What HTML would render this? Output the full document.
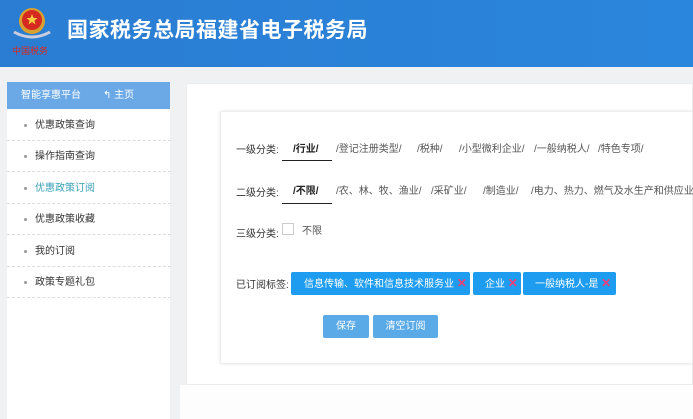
<!DOCTYPE html>
<html><head><meta charset="utf-8"><style>
*{margin:0;padding:0;box-sizing:border-box}
body{width:693px;height:419px;overflow:hidden;background:#f0f1f3;font-family:"Liberation Sans","Noto Sans CJK SC",sans-serif;position:relative;color:#333}
.a{position:absolute;white-space:nowrap}
#hd{left:0;top:0;width:693px;height:67px;background:linear-gradient(90deg,#2a7dd2,#2a86dc)}
#title{left:67px;top:14px;font-size:21px;font-weight:bold;color:#fff;letter-spacing:0.5px}
#sb{left:7px;top:82px;width:163px;height:337px;background:#fff}
#sbh{left:7px;top:82px;width:163px;height:27px;background:#6aa9e6;color:#fff;font-size:10px;line-height:27px}
.mi{left:7px;width:164px;height:31px;border-bottom:1px dashed #ddd;font-size:10px;line-height:31px;padding-left:28px;color:#333}
.mi:before{content:"";position:absolute;left:17px;top:14px;width:3px;height:3px;border-radius:50%;background:#999}
#mp{left:186px;top:83px;width:507px;height:302px;background:#fff;border:1px solid #ececec}
#bot{left:180px;top:385px;width:513px;height:34px;background:#fdfdfd}
#cd{left:220px;top:111px;width:473px;height:253px;background:#fff;border:1px solid #eee;box-shadow:0 0 3px #e4e4e4}
.lb{font-size:10px;color:#333}
.t{font-size:10px;color:#555}
.tag{top:272px;height:23px;background:#1e9df0;color:#fff;font-size:10px;line-height:23px;border-radius:2px}
.x{color:#e8407a;font-size:12px;font-weight:bold}
.btn{top:315px;height:23px;background:#5aaae8;color:#fff;font-size:10px;line-height:23px;text-align:center;border-radius:2px}
</style></head><body>
<div class="a" id="hd"></div>
<svg class="a" style="left:8px;top:2px" width="48" height="60" viewBox="0 0 48 60">
<circle cx="24" cy="19" r="13" fill="#d8a030"/><circle cx="24" cy="18" r="10" fill="#d42a20"/>
<path d="M24 12l1.5 4h4l-3 2.5 1 4-3.5-2.5-3.5 2.5 1-4-3-2.5h4z" fill="#f4d040"/>
<path d="M6 30q18 10 36 0" stroke="#ccd" stroke-width="3" fill="none"/>
<text x="4" y="52" font-size="9" fill="#d42a20" font-family="Noto Sans CJK SC">中国税务</text>
</svg>
<div class="a" id="title">国家税务总局福建省电子税务局</div>
<div class="a" id="sb"></div>
<div class="a" id="sbh"><span style="margin-left:14px">智能享惠平台</span><span style="margin-left:22px">↰ 主页</span></div>
<div class="a mi" style="top:110px">优惠政策查询</div>
<div class="a mi" style="top:141px">操作指南查询</div>
<div class="a mi" style="top:173px;color:#3aa0b8">优惠政策订阅</div>
<div class="a mi" style="top:204px">优惠政策收藏</div>
<div class="a mi" style="top:236px">我的订阅</div>
<div class="a mi" style="top:267px">政策专题礼包</div>
<div class="a" id="mp"></div>
<div class="a" id="bot"></div>
<div class="a" id="cd"></div>
<div class="a lb" style="left:236px;top:141px">一级分类:</div>
<div class="a t" style="left:293px;top:140px;font-weight:bold;color:#222">/行业/</div>
<div class="a" style="left:282px;top:160px;width:50px;height:1px;background:#222"></div>
<div class="a t" style="left:336px;top:140px">/登记注册类型/</div>
<div class="a t" style="left:417px;top:140px">/税种/</div>
<div class="a t" style="left:459px;top:140px">/小型微利企业/</div>
<div class="a t" style="left:534px;top:140px">/一般纳税人/</div>
<div class="a t" style="left:598px;top:140px">/特色专项/</div>
<div class="a lb" style="left:236px;top:184px">二级分类:</div>
<div class="a t" style="left:293px;top:182px;font-weight:bold;color:#222">/不限/</div>
<div class="a" style="left:282px;top:203px;width:50px;height:1px;background:#222"></div>
<div class="a t" style="left:336px;top:182px">/农、林、牧、渔业/</div>
<div class="a t" style="left:431px;top:182px">/采矿业/</div>
<div class="a t" style="left:483px;top:182px">/制造业/</div>
<div class="a t" style="left:531px;top:182px">/电力、热力、燃气及水生产和供应业/</div>
<div class="a lb" style="left:236px;top:225px">三级分类:</div>
<div class="a" style="left:282px;top:223px;width:12px;height:12px;border:1px solid #ccc"></div>
<div class="a t" style="left:302px;top:222px">不限</div>
<div class="a lb" style="left:236px;top:276px">已订阅标签:</div>
<div class="a tag" style="left:291px;width:179px;padding-left:13px">信息传输、软件和信息技术服务业 <span class="x">✕</span></div>
<div class="a tag" style="left:473px;width:48px;padding-left:12px">企业 <span class="x">✕</span></div>
<div class="a tag" style="left:523px;width:93px;padding-left:12px">一般纳税人-是 <span class="x">✕</span></div>
<div class="a btn" style="left:323px;width:46px">保存</div>
<div class="a btn" style="left:373px;width:65px">清空订阅</div>
</body></html>
